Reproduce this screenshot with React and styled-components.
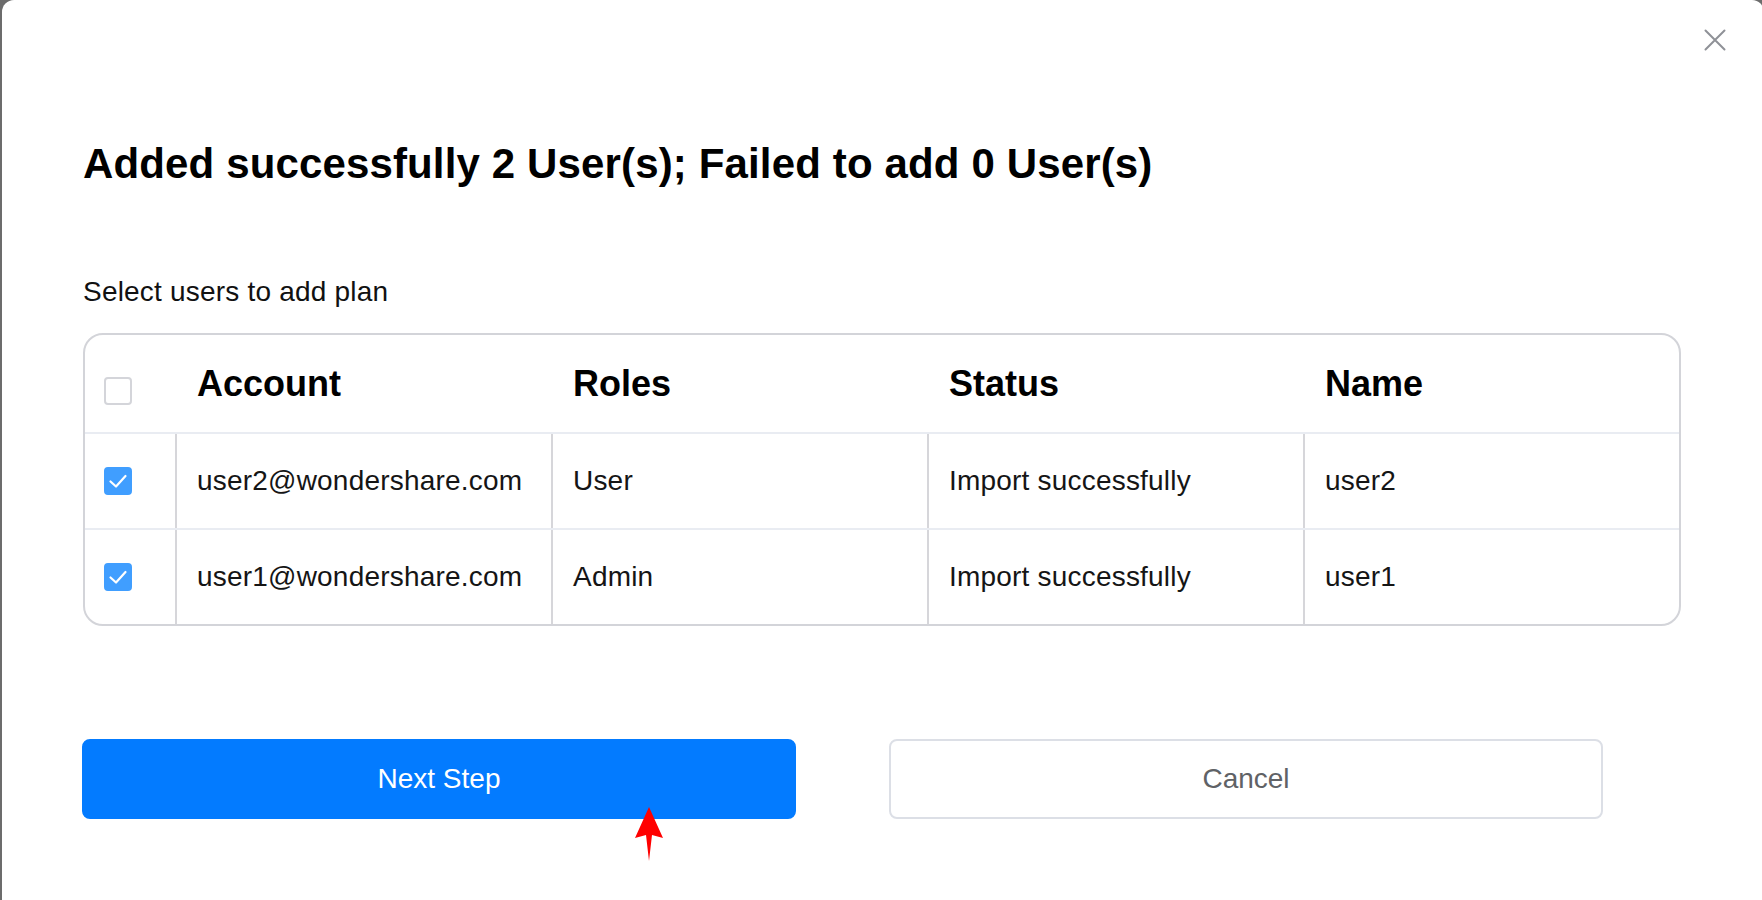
import React from 'react';
import styled, { createGlobalStyle } from 'styled-components';

const GlobalStyle = createGlobalStyle`
	html, body {
		margin: 0;
		padding: 0;
		background: #6c6c6c;
		overflow: hidden;
	}
	* {
		box-sizing: border-box;
	}
`;

const Modal = styled.div`
	position: relative;
	width: 1762px;
	height: 900px;
	margin-left: 2px;
	padding: 140px 83px 0 81px;
	background: #ffffff;
	border-radius: 12px 12px 0 0;
	font-family: 'Liberation Sans', Arial, sans-serif;
	color: #111111;
`;

const CloseButton = styled.button`
	position: absolute;
	top: 29px;
	right: 38px;
	width: 22px;
	height: 22px;
	padding: 0;
	border: none;
	background: transparent;
	cursor: pointer;
	display: flex;
	align-items: center;
	justify-content: center;
`;

const Title = styled.h1`
	margin: 0;
	font-size: 42px;
	line-height: 48px;
	font-weight: 700;
	letter-spacing: 0.14px;
	color: #000000;
`;

const Hint = styled.p`
	margin: 88px 0 25px;
	font-size: 28px;
	line-height: 32px;
	letter-spacing: 0.2px;
	color: #111111;
`;

const Table = styled.div`
	width: 1598px;
	border: 2px solid #d3d4d9;
	border-radius: 20px;
	overflow: hidden;
`;

const Row = styled.div`
	display: grid;
	grid-template-columns: 90px repeat(4, 1fr);
	height: ${(p) => (p.$header ? '97px' : '96px')};
	border-top: ${(p) => (p.$header ? 'none' : '2px solid #e9ecf2')};
`;

const CheckCell = styled.div`
	display: flex;
	align-items: center;
	padding-left: 19px;
	padding-top: ${(p) => (p.$header ? '14px' : '0')};
`;

const HeadCell = styled.div`
	display: flex;
	align-items: center;
	padding-left: 22px;
	font-size: 36px;
	font-weight: 700;
	color: #000000;
`;

const Cell = styled.div`
	display: flex;
	align-items: center;
	padding-left: 20px;
	border-left: 2px solid #d6d6da;
	font-size: 28px;
	letter-spacing: 0.2px;
	color: #151515;
`;

const Box = styled.span`
	display: inline-flex;
	align-items: center;
	justify-content: center;
	width: 28px;
	height: 28px;
	border-radius: 4px;
	border: 2px solid ${(p) => (p.$checked ? '#409eff' : '#d4d5da')};
	background: ${(p) => (p.$checked ? '#409eff' : '#ffffff')};
`;

const ButtonRow = styled.div`
	display: flex;
	gap: 93px;
	margin-top: 113px;
	margin-left: -1px;
`;

const Button = styled.button`
	width: 714px;
	height: 80px;
	border-radius: 8px;
	font-family: 'Liberation Sans', Arial, sans-serif;
	font-size: 28px;
	cursor: pointer;
	border: 2px solid ${(p) => (p.$primary ? '#037bff' : '#dcdfe6')};
	background: ${(p) => (p.$primary ? '#037bff' : '#ffffff')};
	color: ${(p) => (p.$primary ? '#ffffff' : '#606266')};
`;

const Pointer = styled.svg`
	position: absolute;
	left: 632px;
	top: 807px;
`;

const users = [
	{ account: 'user2@wondershare.com', role: 'User', status: 'Import successfully', name: 'user2' },
	{ account: 'user1@wondershare.com', role: 'Admin', status: 'Import successfully', name: 'user1' },
];

function Checkbox({ checked }) {
	return (
		<Box $checked={checked}>
			{checked && (
				<svg width="28" height="28" viewBox="0 0 28 28" style={{ margin: -2 }}>
					<polyline
						points="6.5,14.5 12,19.5 21.5,9"
						fill="none"
						stroke="#ffffff"
						strokeWidth="2.2"
						strokeLinecap="round"
						strokeLinejoin="round"
					/>
				</svg>
			)}
		</Box>
	);
}

export default function App() {
	return (
		<>
			<GlobalStyle />
			<Modal>
				<CloseButton aria-label="close">
					<svg width="22" height="22" viewBox="0 0 22 22">
						<path d="M1.5 1.5 L20.5 20.5 M20.5 1.5 L1.5 20.5" stroke="#8f9197" strokeWidth="2" strokeLinecap="round" />
					</svg>
				</CloseButton>

				<Title>Added successfully 2 User(s); Failed to add 0 User(s)</Title>
				<Hint>Select users to add plan</Hint>

				<Table>
					<Row $header>
						<CheckCell $header>
							<Checkbox />
						</CheckCell>
						<HeadCell>Account</HeadCell>
						<HeadCell>Roles</HeadCell>
						<HeadCell>Status</HeadCell>
						<HeadCell>Name</HeadCell>
					</Row>
					{users.map((u) => (
						<Row key={u.account}>
							<CheckCell>
								<Checkbox checked />
							</CheckCell>
							<Cell>{u.account}</Cell>
							<Cell>{u.role}</Cell>
							<Cell>{u.status}</Cell>
							<Cell>{u.name}</Cell>
						</Row>
					))}
				</Table>

				<ButtonRow>
					<Button $primary>Next Step</Button>
					<Button>Cancel</Button>
				</ButtonRow>

				<Pointer width="30" height="54" viewBox="0 0 30 54">
					<polygon points="15,0 29,31 18,28 15,54 12,28 1,31" fill="#ff0000" />
				</Pointer>
			</Modal>
		</>
	);
}
